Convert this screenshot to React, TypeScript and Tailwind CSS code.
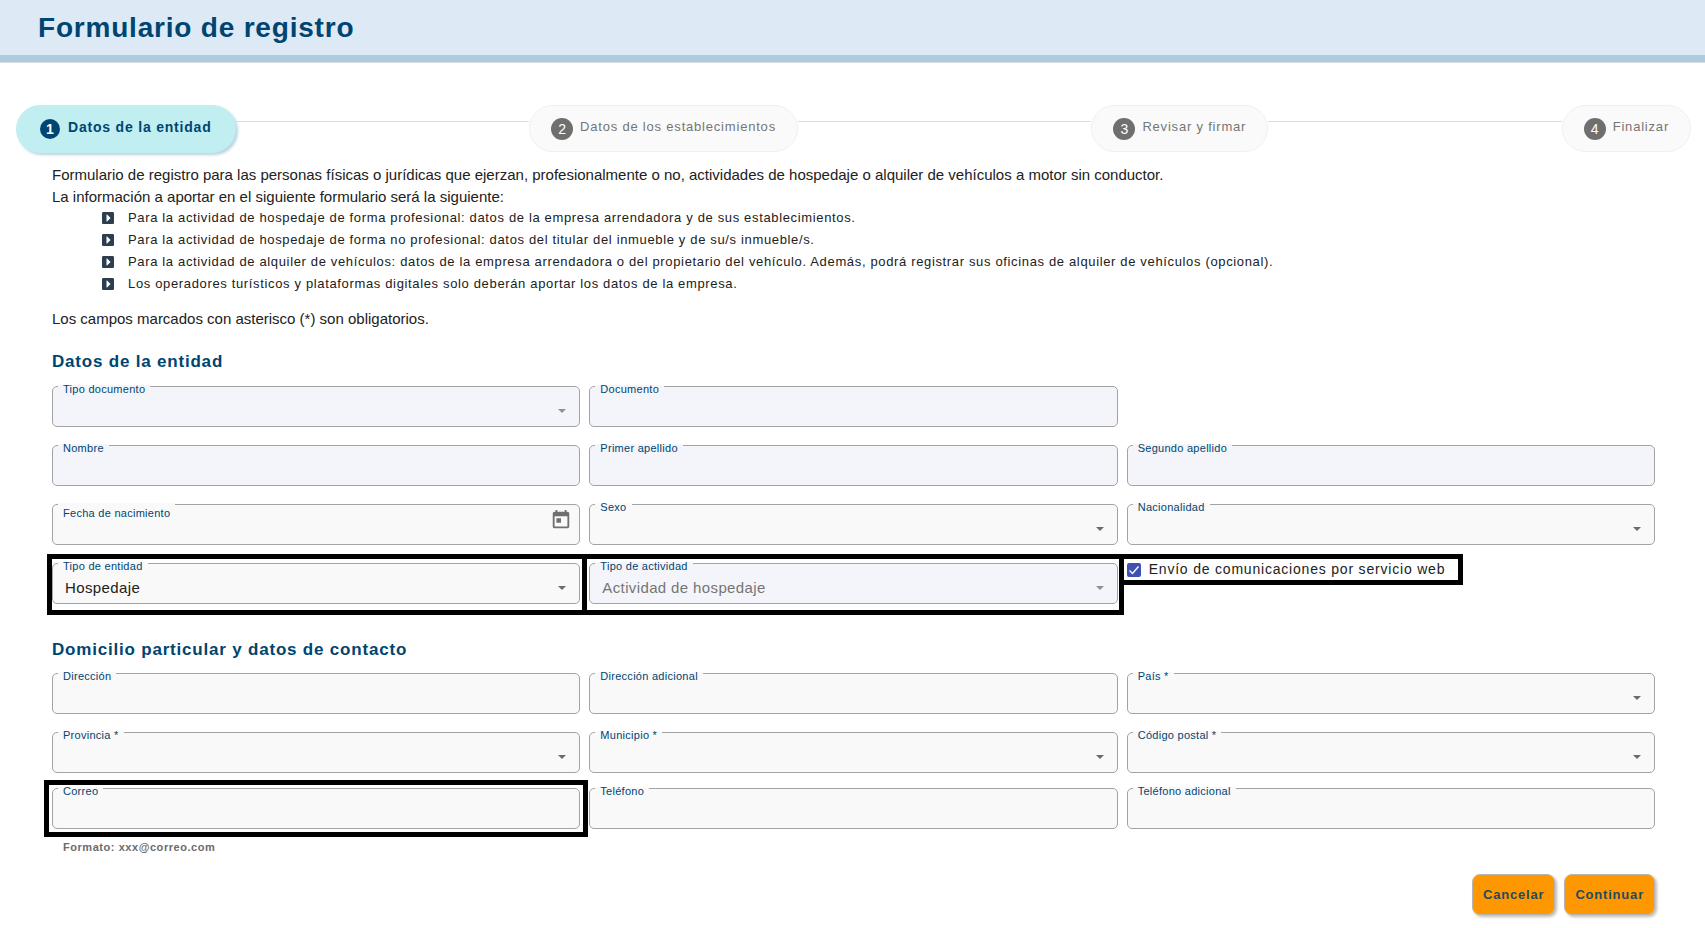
import React, { useId, useState } from "react";
import clsx from "clsx";
import { FaCaretSquareRight } from "react-icons/fa";
import { MdToday } from "react-icons/md";

type FieldProps = {
  label: string;
  disabled?: boolean;
  options?: string[];
  calendar?: boolean;
  type?: string;
  hint?: string;
  children?: React.ReactNode;
};

function Field({ label, disabled, options, calendar, type = "text", hint, children }: FieldProps) {
  const id = useId();
  const tone = disabled ? "bg-[#f4f5fa]" : "bg-[#f9f9f9]";
  const control = clsx(
    "block h-[41px] w-full appearance-none rounded-[5px] border border-[#a3a3a3] px-3 pt-2.5 text-[15px] tracking-wide outline-none focus:border-[#004571] disabled:opacity-100",
    tone,
    disabled ? "text-[#757575]" : "text-[#212121]",
  );

  return (
    <div className="relative">
      {options ? (
        <select id={id} disabled={disabled} className={control}>
          {options.map((o) => (
            <option key={o}>{o}</option>
          ))}
        </select>
      ) : (
        <input id={id} type={type} disabled={disabled} className={control} aria-describedby={hint ? id + "-hint" : undefined} />
      )}
      <label
        htmlFor={id}
        className={clsx(
          "absolute -top-px left-[6px] px-[5px] text-[11px] leading-2 tracking-wide whitespace-nowrap text-[#004571]",
          tone,
          calendar && "pt-1.5",
        )}
      >
        {label}
      </label>
      {options && (
        <svg viewBox="0 0 8 4" className={clsx("pointer-events-none absolute top-[23px] right-3.5 h-1 w-2", disabled ? "fill-[#8f8f94]" : "fill-[#6b6b6b]")} aria-hidden="true">
          <path d="M0 0h8L4 4z" />
        </svg>
      )}
      {calendar && (
        <button type="button" aria-label="Abrir calendario" className="absolute top-[5px] right-2 text-[#6f6f6f]">
          <MdToday size={22} />
        </button>
      )}
      {hint && (
        <p id={id + "-hint"} className="absolute top-full left-[11px] mt-3 text-[11px] leading-3 font-bold tracking-wider text-[#6b6b6b]">
          {hint}
        </p>
      )}
      {children}
    </div>
  );
}

function Line() {
  return <li aria-hidden="true" className="mt-4 h-px flex-1 bg-[#dcdcdc]" />;
}

function Step({ n, label, active }: { n: number; label: string; active?: boolean }) {
  return (
    <li
      aria-current={active ? "step" : undefined}
      className={clsx(
        "flex items-center rounded-full border leading-5",
        active
          ? "h-12 gap-2 border-[#c1eef1] bg-[#c1eef1] px-[23px] text-sm font-bold text-[#004571] shadow-[2px_2px_3px_#b9d3de]"
          : "h-[47px] gap-[7px] border-[#f0f0f0] bg-[#fafafa] px-[21px] text-[13px] text-[#757575]",
      )}
    >
      <span
        className={clsx(
          "flex items-center justify-center rounded-full text-sm tracking-normal text-white",
          active ? "size-5 bg-[#004571]" : "size-[22px] bg-[#6f6f6f]",
        )}
      >
        {n}
      </span>
      <span className="pb-1">{label}</span>
    </li>
  );
}

const bullets = [
  "Para la actividad de hospedaje de forma profesional: datos de la empresa arrendadora y de sus establecimientos.",
  "Para la actividad de hospedaje de forma no profesional: datos del titular del inmueble y de su/s inmueble/s.",
  "Para la actividad de alquiler de vehículos: datos de la empresa arrendadora o del propietario del vehículo. Además, podrá registrar sus oficinas de alquiler de vehículos (opcional).",
  "Los operadores turísticos y plataformas digitales solo deberán aportar los datos de la empresa.",
];

const heading = "text-[17px] leading-6 font-bold text-[#004571]";
const frame = "pointer-events-none absolute border-[5px] border-black";
const action =
  "h-[41px] rounded-lg border border-[#b5b5b5] bg-[#ff9800] px-2.5 text-[13px] font-bold text-[#1f4a63] shadow-[2px_2px_3px_#c4bcb0]";

export default function App() {
  const [web, setWeb] = useState(true);

  return (
    <div className="min-h-screen bg-white font-['Liberation_Sans',Arial,sans-serif] tracking-wider text-[#212121]">
      <header className="border-b border-[#d9dfe2]">
        <div className="border-b-[7px] border-[#abcddd] bg-[#dde9f5] px-[38px] pt-2.5 pb-[9px]">
          <h1 className="text-[28px] leading-9 font-bold text-[#004571]">Formulario de registro</h1>
        </div>
      </header>

      <ol className="mt-[42px] flex h-12 items-start pr-3.5 pl-4">
        <Step n={1} label="Datos de la entidad" active />
        <Line />
        <Step n={2} label="Datos de los establecimientos" />
        <Line />
        <Step n={3} label="Revisar y firmar" />
        <Line />
        <Step n={4} label="Finalizar" />
      </ol>

      <form className="pt-[11px] pr-[50px] pl-[52px]" onSubmit={(e) => e.preventDefault()}>
        <div className="text-[15px] leading-[22px] tracking-normal">
          <p>Formulario de registro para las personas físicas o jurídicas que ejerzan, profesionalmente o no, actividades de hospedaje o alquiler de vehículos a motor sin conductor.</p>
          <p>La información a aportar en el siguiente formulario será la siguiente:</p>
          <ul className="-mt-px pb-px pl-[50px] text-[13px] tracking-wider">
            {bullets.map((b) => (
              <li key={b} className="flex items-center gap-3.5">
                <FaCaretSquareRight size={14} className="w-3 shrink-0 text-[#2c3e50]" aria-hidden="true" />
                {b}
              </li>
            ))}
          </ul>
          <p className="mt-3">Los campos marcados con asterisco (*) son obligatorios.</p>
        </div>

        <h2 className={clsx(heading, "mt-5")}>Datos de la entidad</h2>
        <div className="mt-3 grid grid-cols-3 gap-x-[9px] gap-y-[18px]">
          <Field label="Tipo documento" disabled options={[""]} />
          <Field label="Documento" disabled />
          <div />
          <Field label="Nombre" disabled />
          <Field label="Primer apellido" disabled />
          <Field label="Segundo apellido" disabled />
          <Field label="Fecha de nacimiento" calendar />
          <Field label="Sexo" options={[""]} />
          <Field label="Nacionalidad" options={[""]} />
          <Field label="Tipo de entidad" options={["Hospedaje"]}>
            <div className={clsx(frame, "-top-[9px] -right-[7px] -bottom-[11px] -left-[5px]")} />
          </Field>
          <Field label="Tipo de actividad" disabled options={["Actividad de hospedaje"]}>
            <div className={clsx(frame, "-top-[9px] -right-[6px] -bottom-[11px] -left-[7px]")} />
          </Field>
          <div className="flex items-start">
            <label className="relative flex items-center gap-2 text-sm leading-3">
              <span className="relative flex">
                <input
                  type="checkbox"
                  checked={web}
                  onChange={(e) => setWeb(e.target.checked)}
                  className="size-3.5 appearance-none rounded-xs border-2 border-[#757575] checked:border-[#3f51b5] checked:bg-[#3f51b5]"
                />
                {web && (
                  <svg viewBox="0 0 14 14" className="pointer-events-none absolute inset-0 size-3.5" aria-hidden="true">
                    <path d="M2.5 7.5l3 3 6-7" fill="none" stroke="#fff" strokeWidth="1.4" />
                  </svg>
                )}
              </span>
              <span className="pb-0.5">Envío de comunicaciones por servicio web</span>
              <span className={clsx(frame, "-top-[9px] -right-[18px] -bottom-2 -left-2")} />
            </label>
          </div>
        </div>

        <h2 className={clsx(heading, "mt-[34px]")}>Domicilio particular y datos de contacto</h2>
        <div className="mt-[11px] grid grid-cols-3 gap-x-[9px] gap-y-[18px]">
          <Field label="Dirección" />
          <Field label="Dirección adicional" />
          <Field label="País *" options={[""]} />
          <Field label="Provincia *" options={[""]} />
          <Field label="Municipio *" options={[""]} />
          <Field label="Código postal *" options={[""]} />
        </div>
        <div className="mt-[15px] grid grid-cols-3 gap-x-[9px]">
          <Field label="Correo" type="email" hint="Formato: xxx@correo.com">
            <div className={clsx(frame, "-inset-2")} />
          </Field>
          <Field label="Teléfono" type="tel" />
          <Field label="Teléfono adicional" type="tel" />
        </div>

        <div className="mt-[45px] flex justify-end gap-[9px]">
          <button type="button" className={action}>Cancelar</button>
          <button type="submit" className={action}>Continuar</button>
        </div>
      </form>
    </div>
  );
}
